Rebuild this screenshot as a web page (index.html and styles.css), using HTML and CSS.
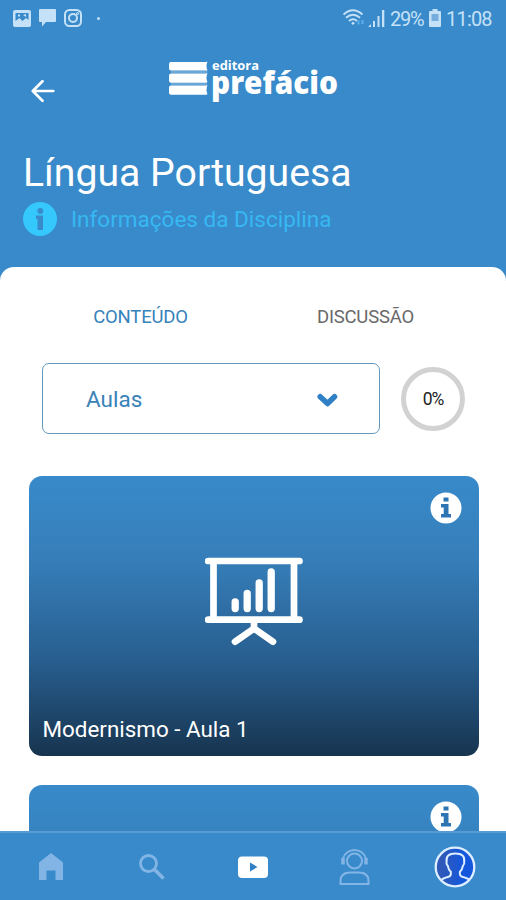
FILE: index.html
```html
<!DOCTYPE html>
<html lang="pt-BR">
<head>
<meta charset="utf-8">
<meta name="viewport" content="width=device-width">
<title>Língua Portuguesa</title>
<link rel="stylesheet" href="styles.css">
</head>
<body>
<div class="app">
  <div class="status">
    <div class="status-left">
      <svg width="18" height="17" viewBox="0 0 18 17"><path fill="currentColor" fill-rule="evenodd" d="M2 0h14a2 2 0 0 1 2 2v13a2 2 0 0 1-2 2H2a2 2 0 0 1-2-2V2a2 2 0 0 1 2-2zM2.500 3v8l4-3 3 3 3.500-3 2.500 2V3zM5 4.500h2v2H5zM10 5l3-1v3z"/></svg>
      <svg width="17" height="18" viewBox="0 0 17 18"><path fill="currentColor" d="M1 0h15a1 1 0 0 1 1 1v11a1 1 0 0 1-1 1H7l-4 4.500V13H1a1 1 0 0 1-1-1V1a1 1 0 0 1 1-1z"/></svg>
      <svg width="18" height="18" viewBox="0 0 18 18" fill="none" stroke="currentColor" stroke-width="2"><rect x="1" y="1" width="16" height="16" rx="4.500"/><circle cx="9" cy="9" r="4"/><circle cx="13.500" cy="4.500" r=".5"/></svg>
      <span class="dot"></span>
    </div>
    <div class="status-right">
      <svg width="22" height="18" viewBox="0 0 22 18" fill="none" stroke="currentColor" stroke-width="1.900"><path d="M.5 5.500q9.500-8.500 19 0M3 8.800q7-6 14 0M6 12q4-3.500 8 0"/><circle cx="10" cy="14.300" r="1.400" fill="currentColor" stroke="none"/><path stroke="#5eb0ec" stroke-width="2" d="M15.500 11.500v4M19.500 11v4"/></svg>
      <svg class="signal" width="17" height="18" viewBox="0 0 17 18" fill="currentColor"><path d="M0 18l3-3v3zM5 12h2v6H5zM9.500 7h2v11h-2zM14 1h2.300v17H14z"/></svg>
      <span class="battery-text">29%</span>
      <svg class="battery" width="12" height="18" viewBox="0 0 12 18"><path fill="currentColor" fill-rule="evenodd" d="M3.500 0h5v2H11a1 1 0 0 1 1 1v14a1 1 0 0 1-1 1H1a1 1 0 0 1-1-1V3a1 1 0 0 1 1-1h2.500z"/><path fill="#75aedd" d="M2.500 5h7v7h-7z"/></svg>
      <span class="clock">11:08</span>
    </div>
  </div>

  <header class="toolbar">
    <svg class="back" width="24" height="24" viewBox="0 0 24 24" fill="none" stroke="#fff" stroke-width="2.700" stroke-linecap="round" stroke-linejoin="round"><path d="M22.300 12H2M11.500 2.300L1.800 12l9.700 9.700"/></svg>
    <svg class="logo" width="172" height="46" viewBox="0 0 172 46" fill="#fff">
      <path d="M3 4h35l1.500-.5q-2 4.700 0 9.300L38 12.600H3Q1 12.600 1 10.500V6Q1 4 3 4zM3 15.500h35l1.500-.5q-2 4.700 0 9.300L38 24.700H3Q1 24.700 1 22.700v-5Q1 15.500 3 15.500zM3 27.500h35l1.500-.5q-2 4.700 0 9.300L38 36.800H3Q1 36.800 1 34.800v-5Q1 27.500 3 27.500z"/>
      <path stroke="#c7dff2" stroke-width=".7" d="M3 14h36M3 26h36"/>
      <text class="logo-small" x="44" y="12.300" textLength="47" lengthAdjust="spacingAndGlyphs">editora</text>
      <text class="logo-name" x="43" y="36" textLength="127" lengthAdjust="spacingAndGlyphs">prefácio</text>
    </svg>
  </header>

  <section class="course">
    <h1>Língua Portuguesa</h1>
    <div class="course-info">
      <svg width="34" height="34" viewBox="0 0 34 34"><circle cx="17" cy="17" r="17" fill="#35c8fd"/><g fill="#388aca"><circle cx="17.300" cy="9" r="2.900"/><path d="M13 13.500h7V28h-5.500V17H13z"/></g></svg>
      <span>Informações da Disciplina</span>
    </div>
  </section>

  <main class="sheet">
    <nav class="tabs"><span class="tab active">CONTEÚDO</span><span class="tab">DISCUSSÃO</span></nav>
    <div class="filter">
      <div class="select"><span>Aulas</span>
        <svg width="22" height="16" viewBox="0 0 22 16" fill="none" stroke="#2f80c5" stroke-width="5.500" stroke-linecap="round" stroke-linejoin="round"><path d="M4.200 4.700L11.500 11.500l7-6.800"/></svg>
      </div>
      <div class="progress">0%</div>
    </div>
    <article class="card">
      <svg class="info" width="32" height="32" viewBox="0 0 32 32"><circle cx="16" cy="16" r="15.500" fill="#fff"/><path fill="#2c74b4" d="M13.500 5.500h5v4h-5zM11 12h7.500v10H21v3.500H11V22h2.700v-6.500H11z"/></svg>
      <svg class="board" width="98" height="92" viewBox="0 0 98 92" fill="none" stroke="#fff" stroke-width="6.700" stroke-linecap="round" stroke-linejoin="round"><path d="M3 5h91.500M3 63.700h91.500M8.500 5v58M89 5v58M49 64v8.500L30 85.700M49 72.500L68 85.700"/><path stroke-width="7.300" d="M30.200 45.900v6.600M42.200 37.500v15M54.200 27v25.500M66.200 16v36.500"/></svg>
      <h2>Modernismo - Aula 1</h2>
    </article>
    <article class="card">
      <svg class="info" width="32" height="32" viewBox="0 0 32 32"><circle cx="16" cy="16" r="15.500" fill="#fff"/><path fill="#2c74b4" d="M13.500 5.500h5v4h-5zM11 12h7.500v10H21v3.500H11V22h2.700v-6.500H11z"/></svg>
    </article>
  </main>

  <nav class="bottom">
    <span class="item"><svg width="26" height="28" viewBox="0 0 26 28"><path fill="#82b5e5" d="M13 0l12 9.500V27h-7.500v-9.500h-9V27H1V9.500z"/></svg></span>
    <span class="item"><svg width="28" height="28" viewBox="0 0 28 28" fill="none" stroke="#82b5e5"><circle cx="10.500" cy="10.500" r="8" stroke-width="2.800"/><path stroke-width="3.500" d="M16 16l9.500 9.500"/></svg></span>
    <span class="item"><svg width="32" height="24" viewBox="0 0 32 24"><rect x="1" y="1.500" width="30" height="21.500" rx="4" fill="#fff"/><path fill="#2f80c5" d="M13 7.500l7.500 4.500-7.500 4.500z"/></svg></span>
    <span class="item"><svg width="32" height="38" viewBox="0 0 32 38" fill="none" stroke="#82b5e5" stroke-width="2"><circle cx="16.500" cy="13" r="7.500"/><path d="M5 10.500a12 12 0 0 1 23 0M2.500 36v-3q0-8.500 10-8.500h8q10 0 10 8.500v3z"/><path stroke-width="3.500" d="M5 10v6.500M28 10v6.500"/></svg></span>
    <span class="item"><svg width="42" height="42" viewBox="0 0 42 42"><defs><linearGradient id="avatar"><stop offset=".15" stop-color="#3058b8"/><stop offset=".7" stop-color="#1557dc"/></linearGradient></defs><circle cx="21" cy="21" r="19.300" fill="url(#avatar)" stroke="#dceeff" stroke-width="2.300"/><path fill="none" stroke="#dceeff" stroke-width="2" d="M7.500 34q1-1.500 7-3.200 3-1 2.300-5-2.500-2.500-3-6-1.800-1.500-1.200-4.500-1-7.800 8.800-7.800t8.800 7.800q.5 3-1.300 4.500-.5 3.500-3 6-.6 4 2.400 5 6 1.700 7 3.200"/></svg></span>
  </nav>
</div>
</body>
</html>
```

FILE: styles.css
```css
* { box-sizing: border-box; }

body {
  margin: 0;
  font-family: Roboto, "Liberation Sans", sans-serif;
}

svg { display: block; flex: none; }

.app {
  display: flex;
  flex-direction: column;
  width: 506px;
  height: 900px;
  overflow: hidden;
  background: #388aca;
  color: #fff;
}

.status {
  display: flex;
  justify-content: space-between;
  align-items: center;
  height: 36px;
  padding: 0 13px;
  color: #c5e1f7;
}

.status-left, .status-right { display: flex; align-items: center; }
.status-left { gap: 8px; }
.dot { width: 3px; height: 3px; margin-left: 7px; border-radius: 50%; background: currentColor; }
.status-right svg:first-child { margin-right: 2px; }
.signal { margin-left: 1px; }
.battery-text, .clock { padding-top: 1px; font-size: 20px; line-height: 36px; white-space: nowrap; }
.battery-text { width: 35px; margin-left: 5px; letter-spacing: -1.2px; }
.battery { margin-left: 4px; }
.clock { width: 47px; margin-left: 5px; letter-spacing: -0.8px; }

.toolbar { display: flex; height: 106px; padding-left: 31px; }
.back { margin-top: 43px; }
.logo { margin: 22px 0 0 113px; overflow: visible; }
.logo-small { font: 700 13px "Open Sans", sans-serif; }
.logo-name { font: 800 31px "Open Sans", sans-serif; }

.course { height: 125px; padding: 8px 23px 0; }
.course h1 { margin: 0; font-size: 39.2px; font-weight: 400; line-height: 47px; white-space: nowrap; }
.course-info {
  display: flex;
  align-items: center;
  gap: 14px;
  margin-top: 4px;
  color: #37b8f2;
  font-size: 22.5px;
  line-height: 34px;
  white-space: nowrap;
}
.course-info span { padding-top: 1px; }

.sheet {
  flex: 1;
  min-height: 0;
  overflow: hidden;
  border-radius: 14px 14px 0 0;
  background: #fff;
}

.tabs { display: grid; grid-template-columns: 1fr 1fr; height: 96px; padding: 0 28px; }
.tab { padding-top: 38px; color: #696969; font-size: 18.5px; line-height: 24px; text-align: center; letter-spacing: -0.2px; }
.active { color: #3582bb; }

.filter { display: flex; align-items: center; gap: 21px; padding-left: 42px; }
.select {
  display: flex;
  justify-content: space-between;
  align-items: center;
  width: 338px;
  height: 71px;
  padding: 0 41px 0 43px;
  border: 1.5px solid #6498bb;
  border-radius: 7px;
  color: #3982b8;
  font-size: 22.5px;
}
.select svg { margin-top: 3px; }
.progress {
  display: grid;
  place-items: center;
  width: 64px;
  height: 64px;
  border: 5px solid #d2d2d2;
  border-radius: 50%;
  color: #222;
  font-size: 17.5px;
  letter-spacing: -1px;
}

.card {
  display: grid;
  grid-template-rows: 32px 90px 1fr;
  width: 450px;
  height: 280px;
  margin: 42px 0 0 28.5px;
  padding: 16px 14px 11px;
  border-radius: 13px;
  background: linear-gradient(#388aca 0%, #367eb9 30%, #285f90 65%, #17344f 100%);
}
.card + .card { margin-top: 29px; }
.info { justify-self: end; margin-right: 3px; }
.board { justify-self: center; margin-top: 32px; }
.card h2 { align-self: end; margin: 0; font-size: 22.4px; font-weight: 400; line-height: 32px; }

.bottom {
  display: grid;
  grid-template-columns: repeat(5, 1fr);
  align-items: center;
  height: 69px;
  border-top: 2px solid #579ad5;
}
.item { display: flex; justify-content: center; }
```
